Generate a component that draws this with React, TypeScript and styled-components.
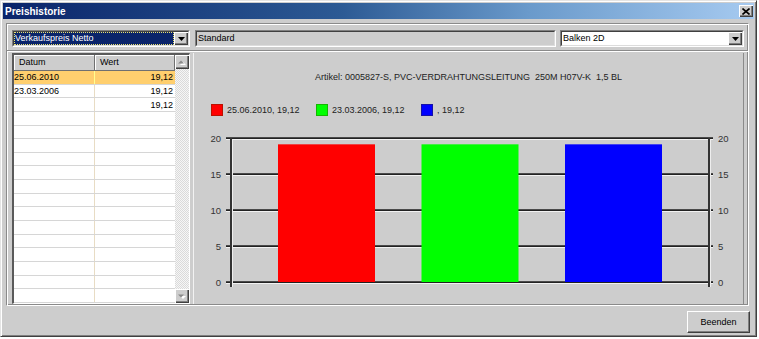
import React from 'react';
import styled, { createGlobalStyle } from 'styled-components';

const UI_FONT = '"Liberation Sans", Arial, sans-serif';

const GlobalStyle = createGlobalStyle`
  html, body { margin: 0; padding: 0; background: #ffffff; }
  body { font-family: ${UI_FONT}; font-size: 9px; color: #000; }
  * { box-sizing: border-box; }
`;

const Window = styled.div`
  width: 757px;
  height: 337px;
  background: #cdcdcd;
  border: 1px solid;
  border-color: #e4e4e4 #404040 #404040 #e4e4e4;
  box-shadow: inset 1px 1px #ffffff, inset -1px -1px #808080;
  padding: 2px;
  display: flex;
  flex-direction: column;
`;

const TitleBar = styled.div`
  height: 16px;
  flex: none;
  display: flex;
  align-items: center;
  padding: 0 1px 0 2px;
  background: linear-gradient(90deg, #0a246a 0%, #2c5a94 45%, #6a9acb 70%, #a6caf0 100%);
`;

const Title = styled.span`
  flex: 1;
  font-weight: bold;
  font-size: 10px;
  color: #ffffff;
`;

const CloseButton = styled.div`
  width: 14px;
  height: 12px;
  background: #cdcdcd;
  display: flex;
  align-items: center;
  justify-content: center;
  box-shadow: inset 1px 1px #ffffff, inset -1px -1px #404040, inset -2px -2px #808080;
`;

const Frame = styled.div`
  margin: 4px 5px 0 3px;
  height: 283px;
  flex: none;
  display: flex;
  flex-direction: column;
  border: 1px solid;
  border-color: #8a8a8a #ffffff #ffffff #8a8a8a;
  box-shadow: inset 1px 1px #ffffff, inset -1px -1px #8a8a8a;
`;

const Toolbar = styled.div`
  flex: none;
  height: 23px;
  padding: 6px 4px 0 5px;
  display: flex;
`;

const Sunken = styled.div<{ $width?: number; $bg?: string }>`
  height: 17px;
  ${(p) => (p.$width ? `width: ${p.$width}px; flex: none;` : 'flex: 1;')}
  border: 1px solid;
  border-color: #808080 #ffffff #ffffff #808080;
  background: ${(p) => p.$bg || '#ffffff'};
  display: flex;
`;

const SunkenInner = styled.div`
  flex: 1;
  display: flex;
  border: 1px solid;
  border-color: #404040 #dcdcdc #dcdcdc #404040;
  min-width: 0;
`;

const FieldText = styled.div<{ $selected?: boolean }>`
  flex: 1;
  padding-left: 1px;
  line-height: 13px;
  white-space: nowrap;
  overflow: hidden;
  color: ${(p) => (p.$selected ? '#ffffff' : '#000000')};
  background: ${(p) => (p.$selected ? '#0a246a' : 'transparent')};
  outline: ${(p) => (p.$selected ? '1px dotted #e8e070' : 'none')};
  outline-offset: -1px;
`;

const StandardField = styled(Sunken)`
  margin: 0 4px 0 5px;
`;

const DropButton = styled.div`
  width: 14px;
  flex: none;
  background: #cdcdcd;
  display: flex;
  align-items: center;
  justify-content: center;
  box-shadow: inset 1px 1px #ffffff, inset -1px -1px #404040, inset -2px -2px #808080;
`;

const Lower = styled.div`
  flex: 1;
  min-height: 0;
  margin-top: 3px;
  border-top: 1px solid #8a8a8a;
  box-shadow: inset 0 1px #ffffff;
  padding: 2px 4px 1px 5px;
  display: flex;
  gap: 3px;
`;

const List = styled.div`
  width: 178px;
  flex: none;
  display: flex;
  border-style: solid;
  border-width: 2px 1px 1px 2px;
  border-color: #5a5a5a #ffffff #ffffff #5a5a5a;
  background: #ffffff;
`;

const Table = styled.div`
  width: 161px;
  flex: none;
  display: flex;
  flex-direction: column;
`;

const HeaderRow = styled.div`
  height: 16px;
  flex: none;
  display: flex;
  background: #cdcdcd;
`;

const HeaderCell = styled.div<{ $width: number }>`
  width: ${(p) => p.$width}px;
  padding-left: 5px;
  line-height: 15px;
  border-right: 1px solid #707070;
  border-bottom: 1px solid #707070;
  box-shadow: inset 1px 1px #ffffff;
  color: #000;
`;

const Rows = styled.div`
  flex: 1;
  display: flex;
  flex-direction: column;
`;

const Row = styled.div<{ $active?: boolean }>`
  flex: 1;
  display: flex;
  align-items: center;
  border-bottom: 1px solid #d6d6d6;
  background: ${(p) => (p.$active ? '#ffcf6e' : '#ffffff')};
`;

const DateCell = styled.div<{ $active?: boolean }>`
  width: 81px;
  align-self: stretch;
  display: flex;
  align-items: center;
  border-right: 1px solid ${(p) => (p.$active ? '#ffff90' : '#e8dcc4')};
`;

const ValueCell = styled.div`
  flex: 1;
  text-align: right;
  padding-right: 2px;
`;

const ScrollBar = styled.div`
  width: 14px;
  flex: none;
  display: flex;
  flex-direction: column;
  background: repeating-conic-gradient(#f6f6f6 0 25%, #dadada 0 50%) 0 0 / 2px 2px;
`;

const ScrollButton = styled.div`
  height: 14px;
  flex: none;
  background: #cdcdcd;
  display: flex;
  align-items: center;
  justify-content: center;
  box-shadow: inset 1px 1px #ffffff, inset -1px -1px #404040, inset -2px -2px #808080;
`;

const ScrollTrack = styled.div`
  flex: 1;
`;

const ChartPanel = styled.div`
  flex: 1;
  display: flex;
  flex-direction: column;
  border-left: 1px solid #f2f2f2;
  border-right: 1px solid #8a8a8a;
  color: #222222;
`;

const ChartTitle = styled.div`
  margin-top: 18px;
  line-height: 12px;
  text-align: center;
  white-space: pre;
`;

const Legend = styled.div`
  margin-top: 21px;
  height: 12px;
  padding-left: 17px;
  display: flex;
`;

const LegendItem = styled.div`
  width: 105px;
  display: flex;
  align-items: center;
  gap: 4px;
  white-space: nowrap;
`;

const Swatch = styled.span<{ $color: string }>`
  width: 12px;
  height: 12px;
  flex: none;
  background: ${(p) => p.$color};
  border: 1px solid rgba(60, 50, 0, 0.35);
`;

const PlotSvg = styled.svg`
  margin-top: 14px;
  display: block;
  font-family: ${UI_FONT};
  font-size: 9.5px;

  text {
    fill: #333333;
  }
`;

const Footer = styled.div`
  flex: none;
  display: flex;
  justify-content: flex-end;
  padding: 5px 4px 1px 0;
`;

const PushButton = styled.div`
  width: 63px;
  height: 22px;
  display: flex;
  align-items: center;
  justify-content: center;
  background: #cdcdcd;
  border: 1px solid;
  border-color: #ffffff #404040 #404040 #ffffff;
  box-shadow: inset -1px -1px #808080;
`;

const DownArrow = () => (
  <svg width="7" height="4" viewBox="0 0 7 4">
    <path d="M0 0h7L3.5 4z" fill="#000" />
  </svg>
);

const ScrollArrow: React.FC<{ up?: boolean }> = ({ up }) => (
  <svg width="8" height="5" viewBox="0 0 8 5">
    <path d={up ? 'M1 4h6L4 1z' : 'M1 1h6L4 4z'} fill="#ffffff" transform="translate(1 1)" />
    <path d={up ? 'M0 3.5h6L3 0.5z' : 'M0 0.5h6L3 3.5z'} fill="#8a8a8a" />
  </svg>
);

const entries = [
  { date: '25.06.2010', value: '19,12' },
  { date: '23.03.2006', value: '19,12' },
  { date: '', value: '19,12' },
];
const ROW_COUNT = 17;

const series = [
  { label: '25.06.2010, 19,12', color: '#ff0000', value: 19.12 },
  { label: '23.03.2006, 19,12', color: '#00ff00', value: 19.12 },
  { label: ', 19,12', color: '#0000ff', value: 19.12 },
];

const Y0 = 152;
const SCALE = 7.2;
const AXIS_L = 36;
const AXIS_R = 514;
const ticks = [0, 5, 10, 15, 20];

const Plot = () => (
  <PlotSvg width={549} height={165} viewBox="0 0 549 165">
    {ticks.map((t) => {
      const y = Y0 - t * SCALE;
      return (
        <g key={t}>
          <rect x={32} y={y - 1} width={487} height={1} fill="#4a4a4a" />
          <rect x={32} y={y} width={487} height={1} fill="#222" />
          <rect x={32} y={y + 1} width={487} height={1} fill="#f2f2f2" />
          <text x={27} y={y + 4} textAnchor="end">{t}</text>
          <text x={524} y={y + 4}>{t}</text>
        </g>
      );
    })}
    {series.map((s, i) => {
      const h = s.value * SCALE;
      return <rect key={s.color} x={84 + i * 143.5} y={Y0 - h} width={97} height={h} fill={s.color} />;
    })}
    <rect x={32} y={Y0} width={487} height={1} fill="#222" />
    <rect x={AXIS_L} y={Y0 - 20 * SCALE} width={2} height={149} fill="#333" />
    <rect x={AXIS_L + 2} y={Y0 - 20 * SCALE + 1} width={1} height={148} fill="#eeeeee" />
    <rect x={AXIS_R} y={Y0 - 20 * SCALE} width={2} height={149} fill="#333" />
    <rect x={AXIS_R + 2} y={Y0 - 20 * SCALE + 1} width={1} height={148} fill="#eeeeee" />
  </PlotSvg>
);

export default function App() {
  const rows = Array.from({ length: ROW_COUNT }, (_, i) => entries[i] || { date: '', value: '' });

  return (
    <>
      <GlobalStyle />
      <Window>
        <TitleBar>
          <Title>Preishistorie</Title>
          <CloseButton>
            <svg width="8" height="7" viewBox="0 0 8 7">
              <path d="M0.5 0.5L7.5 6.5M7.5 0.5L0.5 6.5" stroke="#000" strokeWidth="1.6" />
            </svg>
          </CloseButton>
        </TitleBar>

        <Frame>
          <Toolbar>
            <Sunken $width={178}>
              <SunkenInner>
                <FieldText $selected>Verkaufspreis Netto</FieldText>
                <DropButton><DownArrow /></DropButton>
              </SunkenInner>
            </Sunken>
            <StandardField $bg="#cdcdcd">
              <SunkenInner>
                <FieldText>Standard</FieldText>
              </SunkenInner>
            </StandardField>
            <Sunken $width={184}>
              <SunkenInner>
                <FieldText>Balken 2D</FieldText>
                <DropButton><DownArrow /></DropButton>
              </SunkenInner>
            </Sunken>
          </Toolbar>

          <Lower>
            <List>
              <Table>
                <HeaderRow>
                  <HeaderCell $width={81}>Datum</HeaderCell>
                  <HeaderCell $width={80}>Wert</HeaderCell>
                </HeaderRow>
                <Rows>
                  {rows.map((r, i) => (
                    <Row key={i} $active={i === 0}>
                      <DateCell $active={i === 0}>{r.date}</DateCell>
                      <ValueCell>{r.value}</ValueCell>
                    </Row>
                  ))}
                </Rows>
              </Table>
              <ScrollBar>
                <ScrollButton><ScrollArrow up /></ScrollButton>
                <ScrollTrack />
                <ScrollButton><ScrollArrow /></ScrollButton>
              </ScrollBar>
            </List>

            <ChartPanel>
              <ChartTitle>Artikel: 0005827-S, PVC-VERDRAHTUNGSLEITUNG  250M H07V-K  1,5 BL</ChartTitle>
              <Legend>
                {series.map((s) => (
                  <LegendItem key={s.color}>
                    <Swatch $color={s.color} />
                    {s.label}
                  </LegendItem>
                ))}
              </Legend>
              <Plot />
            </ChartPanel>
          </Lower>
        </Frame>

        <Footer>
          <PushButton>Beenden</PushButton>
        </Footer>
      </Window>
    </>
  );
}
